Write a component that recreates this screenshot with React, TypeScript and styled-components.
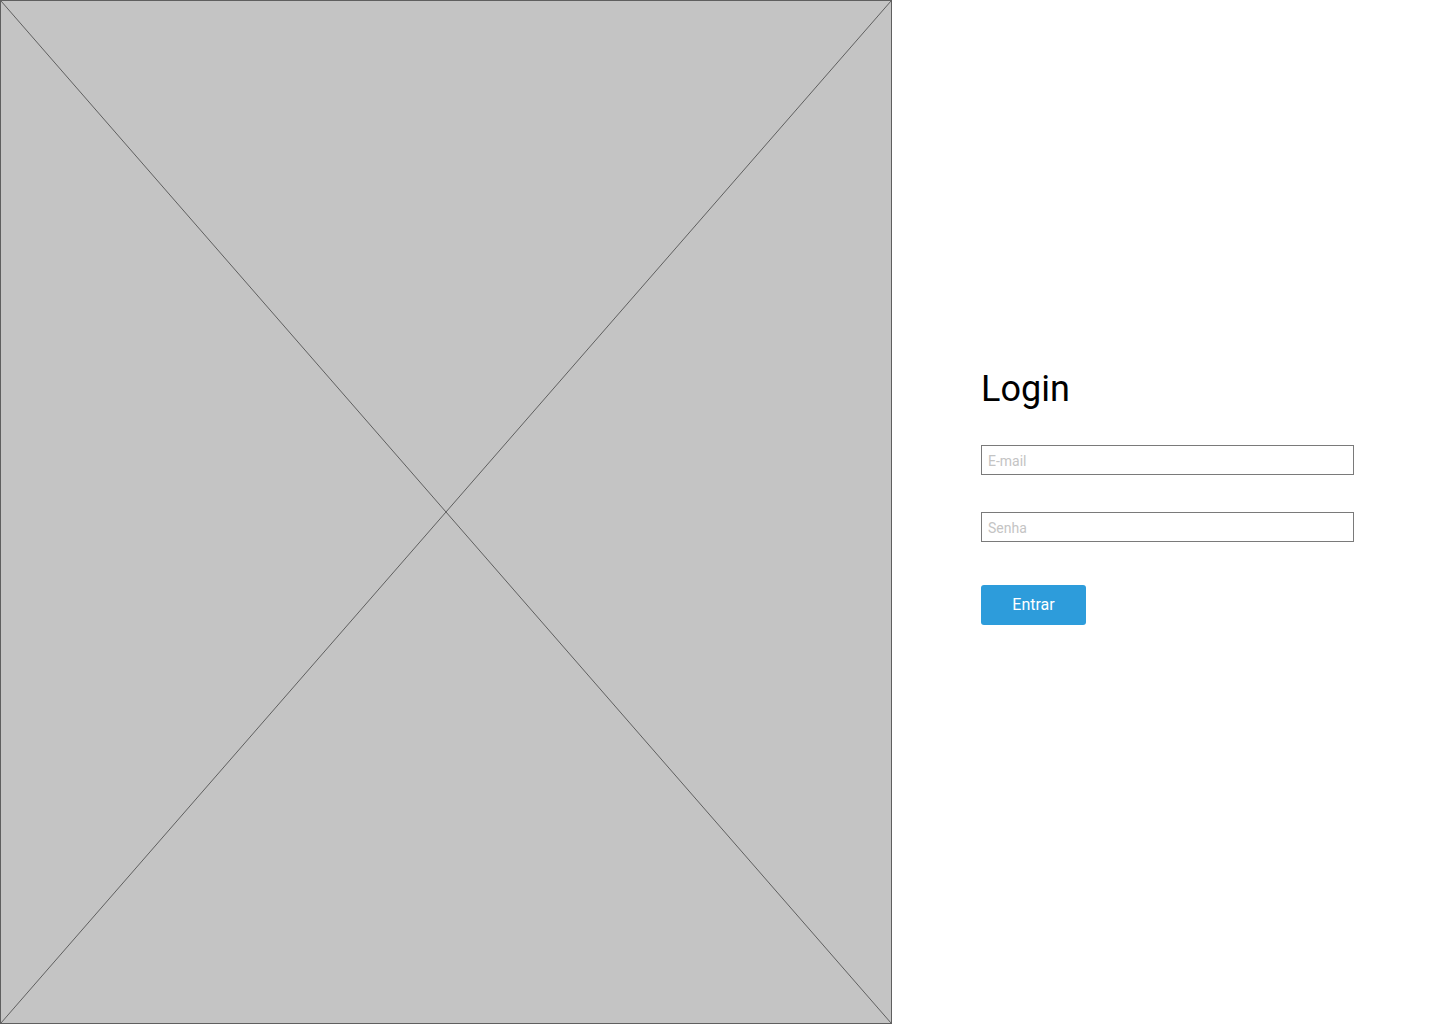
import React from 'react';
import styled, { createGlobalStyle } from 'styled-components';

const GlobalStyle = createGlobalStyle`
  html, body {
    margin: 0;
    padding: 0;
    background: #ffffff;
    font-family: Roboto, "Liberation Sans", sans-serif;
  }
`

const App: React.FC = () => {
  return (
    <>
      <GlobalStyle />
      <Page>
        <ImagePlaceholder>
          <svg width="100%" height="100%" viewBox="0 0 890 1022" preserveAspectRatio="none">
            <line x1="0" y1="0" x2="890" y2="1022" stroke="#5f5f5f" strokeWidth="1" />
            <line x1="890" y1="0" x2="0" y2="1022" stroke="#5f5f5f" strokeWidth="1" />
          </svg>
        </ImagePlaceholder>
        <FormPanel>
          <Title>Login</Title>
          <Form onSubmit={(e) => e.preventDefault()}>
            <Input type="email" placeholder="E-mail" />
            <Input type="password" placeholder="Senha" />
            <Button type="submit">Entrar</Button>
          </Form>
        </FormPanel>
      </Page>
    </>
  );
}

export default App;

const Page = styled.div`
  display: flex;
  width: 1440px;
  height: 1024px;
`

const ImagePlaceholder = styled.div`
  width: 892px;
  height: 1024px;
  box-sizing: border-box;
  border: 1px solid #5f5f5f;
  background-color: #c4c4c4;
  flex-shrink: 0;

  svg {
    display: block;
  }
`

const FormPanel = styled.div`
  flex: 1;
  display: flex;
  flex-direction: column;
  padding: 368px 0 0 89px;
`

const Title = styled.h1`
  margin: 0 0 35px;
  font-size: 36px;
  line-height: 42px;
  font-weight: 400;
  color: #000000;
`

const Form = styled.form`
  display: flex;
  flex-direction: column;
  align-items: flex-start;
`

const Input = styled.input`
  width: 373px;
  height: 30px;
  box-sizing: border-box;
  border: 1px solid #7a7a7a;
  border-radius: 0;
  padding: 2px 6px 0;
  margin: 0 0 37px;
  font-family: Roboto, "Liberation Sans", sans-serif;
  font-size: 14px;
  color: #333;
  outline: none;

  &::placeholder {
    color: #c4c4c4;
  }
`

const Button = styled.button`
  width: 105px;
  height: 40px;
  margin-top: 6px;
  padding: 0 0 2px;
  border: none;
  border-radius: 3px;
  background-color: #2d9cdb;
  color: #ffffff;
  font-family: Roboto, "Liberation Sans", sans-serif;
  font-size: 16px;
  cursor: pointer;
`
